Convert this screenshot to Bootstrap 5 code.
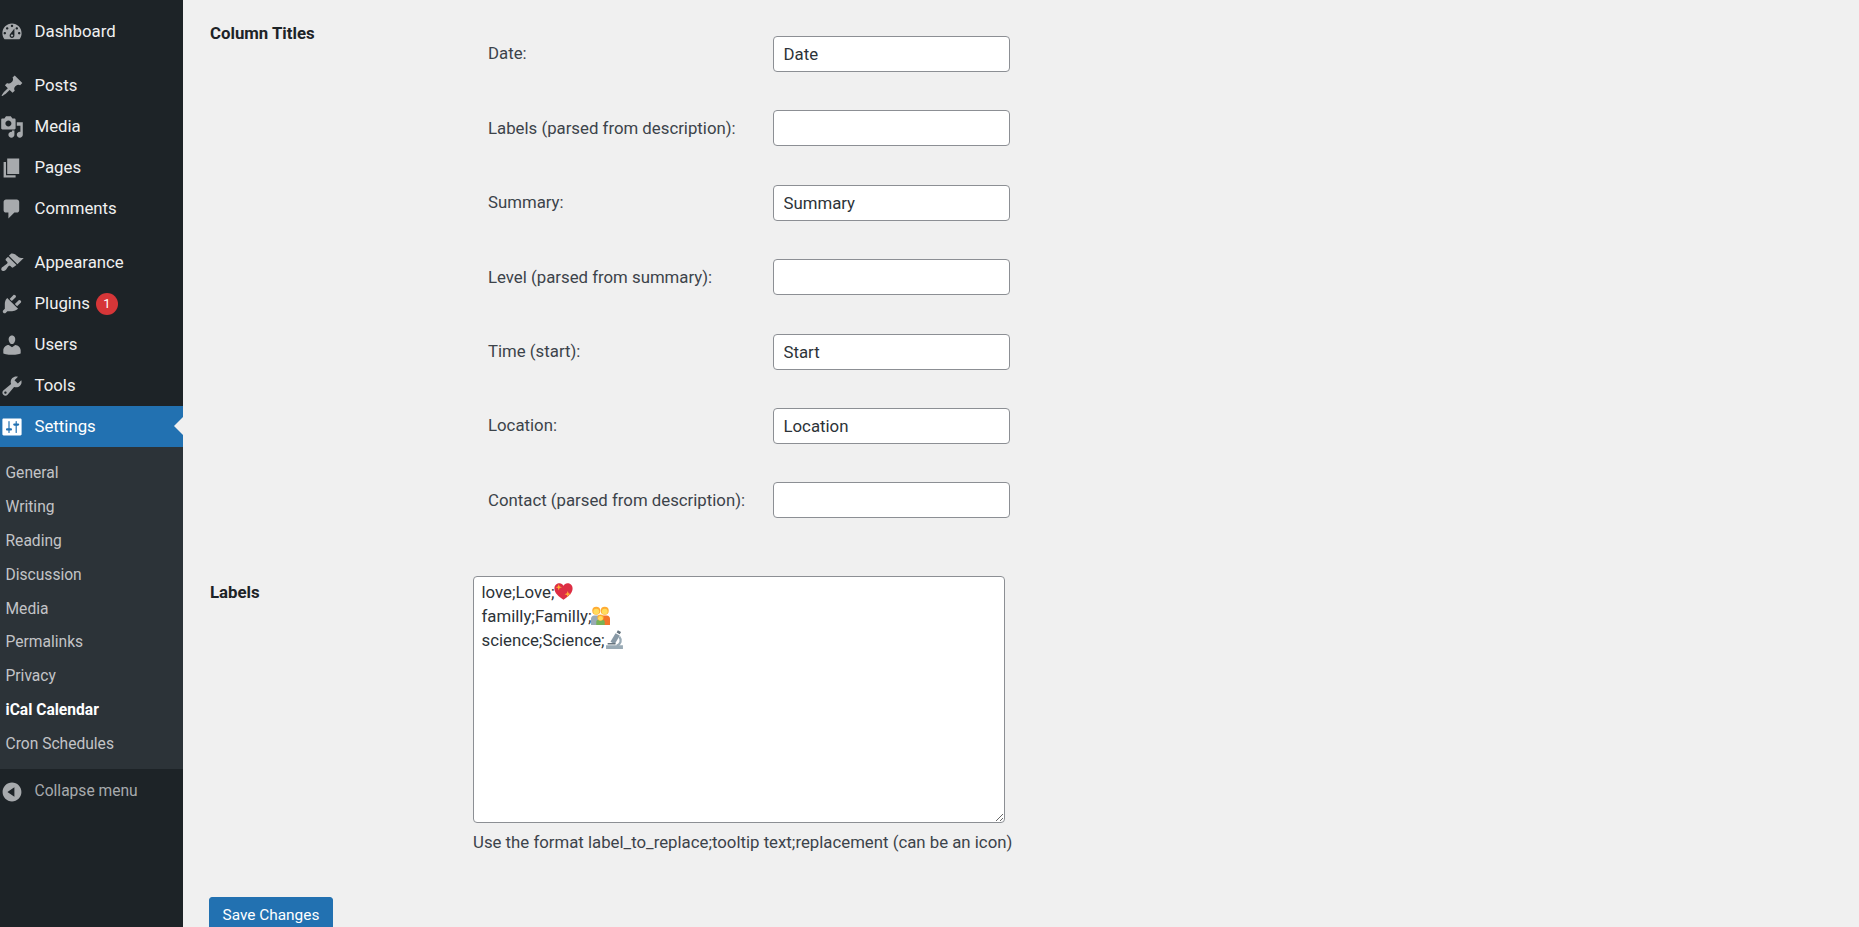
<!DOCTYPE html>
<html lang="en"><head><meta charset="utf-8"><title>iCal Calendar Settings</title>
<link href="https://cdn.jsdelivr.net/npm/bootstrap@5.3.0/dist/css/bootstrap.min.css" rel="stylesheet">
<style>
html,body{height:100%;overflow:hidden}
body{background:#f0f0f0;color:#3c434a;font:16.8px/1.5 Roboto,sans-serif}
.wp-shell{height:927px}
.wp-side{width:183px;flex:none;background:#1d2327;padding-top:11px}
.wp-item{height:41px;color:#f0f0f0;text-decoration:none;padding-left:34.500px;position:relative;line-height:41px;font-size:16.8px}
.wp-item svg{position:absolute;left:0;top:8.500px;width:24px;height:24px;fill:#a7aaad}
.wp-gap{margin-top:13px}
.wp-active{background:#2271b1;color:#fff}
.wp-active svg{fill:#fff}
.wp-active::after{content:"";position:absolute;right:0;top:11px;border:9px solid transparent;border-left:0;border-right-color:#f0f0f0}
.wp-count{width:22px;height:22px;border-radius:50%;background:#d63638;color:#fff;font-size:13px;line-height:22px;text-align:center;margin-left:6px}
.wp-sub{background:#2c3338;padding:10px 0 7px}
.wp-sub a{display:block;height:33.900px;line-height:33.900px;padding-left:5.500px;color:#c3c4c7;text-decoration:none;font-size:15.600px}
.wp-sub a.wp-current{color:#fff;font-weight:700}
.wp-collapse{color:#a7aaad;margin-top:2px;font-size:15.600px}
.wp-collapse svg{top:9px}
.wp-main{padding:0 0 0 27px;min-width:0}
.wp-head{width:263px;flex:none;font-weight:700;color:#1d2327;font-size:16.8px}
.wp-head-first{padding-top:21px}
.wp-fields{padding-top:36px;width:800px}
.wp-field{height:36px;margin-bottom:38.400px}
.wp-field:last-child{margin-bottom:0}
.wp-field label{width:300px;padding-left:15px;margin:0}
.wp-main .form-control{width:237px;height:36px;border:1px solid #8c8f94;border-radius:4px;padding:0 9.500px;color:#2c3338;font:16.8px Roboto,sans-serif;background:#fff}
.wp-labels{margin-top:57.900px}
.wp-labels .wp-head{padding-top:4px}
.wp-area{width:532px;height:247px;border:1px solid #8c8f94;border-radius:4px;background:#fff;padding:2.500px 7.500px;color:#2c3338;line-height:24px;resize:both;overflow:auto}
.wp-area svg{width:19px;height:19px;vertical-align:-3px}
.wp-help{margin:7px 0 0;color:#3c434a}
.wp-save{margin:42px 0 0 -1px;background:#2271b1;border:1px solid #2271b1;border-radius:3px;color:#fff;font-size:15.400px;line-height:1;padding:0 12.500px;height:36px}
.wp-save:hover{background:#135e96;border-color:#135e96}
</style></head><body>
<div class="wp-shell d-flex">
<nav class="wp-side d-flex flex-column">
<a class="wp-item d-flex" href="#"><svg viewBox="0 0 20 20"><path d="M3.760 16h12.480c1.100-1.370 1.760-3.110 1.760-5 0-4.420-3.580-8-8-8s-8 3.580-8 8c0 1.890.66 3.630 1.760 5zM10 4c.55 0 1 .45 1 1s-.45 1-1 1-1-.45-1-1 .45-1 1-1zM6 6c.55 0 1 .45 1 1s-.45 1-1 1-1-.45-1-1 .45-1 1-1zm8 0c.55 0 1 .45 1 1s-.45 1-1 1-1-.45-1-1 .45-1 1-1zm-5.370 5.550L12 7v6c0 1.100-.9 2-2 2s-2-.9-2-2c0-.57.24-1.080.63-1.450zM4 10c.55 0 1 .45 1 1s-.45 1-1 1-1-.45-1-1 .45-1 1-1zm12 0c.55 0 1 .45 1 1s-.45 1-1 1-1-.45-1-1 .45-1 1-1zm-5 3c0-.55-.45-1-1-1s-1 .45-1 1 .45 1 1 1 1-.45 1-1z"/></svg>Dashboard</a>
<a class="wp-item wp-gap d-flex" href="#"><svg viewBox="0 0 20 20"><path d="M10.440 3.020l1.820-1.820 6.360 6.350-1.830 1.820c-1.050-.68-2.480-.57-3.410.36l-.75.75c-.92.93-1.040 2.350-.35 3.410l-1.830 1.820-2.410-2.410-2.800 2.790c-.42.42-3.380 2.710-3.800 2.290s1.860-3.390 2.280-3.810l2.790-2.790L4.100 9.360l1.830-1.820c1.050.69 2.480.57 3.400-.36l.75-.75c.93-.92 1.050-2.350.36-3.410z"/></svg>Posts</a>
<a class="wp-item d-flex" href="#"><svg viewBox="0 0 20 20"><path d="M13 11V4c0-.55-.45-1-1-1h-1.670L9 1H5L3.670 3H2c-.55 0-1 .45-1 1v7c0 .55.45 1 1 1h10c.55 0 1-.45 1-1zM7 4.500c1.380 0 2.500 1.120 2.500 2.500S8.380 9.500 7 9.500 4.500 8.380 4.500 7 5.620 4.500 7 4.500zM14 6h5v10.500c0 1.380-1.120 2.500-2.500 2.500S14 17.880 14 16.500s1.120-2.500 2.500-2.500c.17 0 .34.02.5.05V9h-3V6zm-4 8.050V13h2v3.500c0 1.380-1.120 2.500-2.500 2.500S7 17.880 7 16.500 8.120 14 9.500 14c.17 0 .34.02.5.05z"/></svg>Media</a>
<a class="wp-item d-flex" href="#"><svg viewBox="0 0 20 20"><path d="M6 15V2h10v13H6zm-1 1h8v2H3V5h2v11z"/></svg>Pages</a>
<a class="wp-item d-flex" href="#"><svg viewBox="0 0 20 20"><path d="M5 2h9c1.100 0 2 .9 2 2v7c0 1.100-.9 2-2 2h-2l-5 5v-5H5c-1.100 0-2-.9-2-2V4c0-1.100.9-2 2-2z"/></svg>Comments</a>
<a class="wp-item wp-gap d-flex" href="#"><svg viewBox="0 0 20 20"><path d="M14.480 11.060L7.410 3.990l1.500-1.500c.5-.56 2.300-.47 3.510.32 1.210.8 1.430 1.280 2.910 2.100 1.180.64 2.450 1.260 4.450.85zm-.71.71L6.700 4.700 4.930 6.470c-.39.39-.39 1.020 0 1.410l1.060 1.060c.39.39.39 1.030 0 1.420-.6.6-1.430 1.110-2.210 1.690-.35.26-.7.53-1.010.84C1.430 13.230.6 15.040 1.300 16.100c.76 1.100 2.530.5 3.410-.37.31-.31.58-.66.85-1.010.57-.78 1.080-1.610 1.690-2.210.39-.39 1.020-.39 1.410 0l1.060 1.060c.39.39 1.020.39 1.410 0z"/></svg>Appearance</a>
<a class="wp-item d-flex align-items-center" href="#"><svg viewBox="0 0 20 20"><path d="M13.110 4.360L9.870 7.600 8 5.730l3.240-3.240c.35-.34 1.050-.2 1.560.32.52.51.66 1.210.31 1.550zm-8 1.770l.91-1.120 9.010 9.010-1.190.84c-.71.71-2.630 1.160-3.820 1.160H6.140L4.900 17.260c-.59.59-1.540.59-2.120 0-.59-.58-.59-1.530 0-2.120l1.240-1.240v-3.880c0-1.130.4-3.190 1.090-3.890zm7.260 3.970l3.240-3.240c.34-.35 1.040-.21 1.550.31.52.51.66 1.210.31 1.550l-3.240 3.250z"/></svg>Plugins<span class="wp-count">1</span></a>
<a class="wp-item d-flex" href="#"><svg viewBox="0 0 20 20"><path d="M10 9.250c-2.270 0-2.730-3.440-2.730-3.440C7 4.020 7.820 2 9.970 2c2.160 0 2.980 2.020 2.710 3.810 0 0-.41 3.440-2.680 3.440zm0 2.570L12.720 10c2.390 0 4.520 2.330 4.520 4.530v2.490s-3.650 1.130-7.240 1.130c-3.650 0-7.240-1.130-7.240-1.130v-2.490c0-2.250 1.940-4.480 4.470-4.480z"/></svg>Users</a>
<a class="wp-item d-flex" href="#"><svg viewBox="0 0 20 20"><path d="M16.680 9.770c-1.340 1.340-3.300 1.670-4.950.99l-5.410 6.520c-.99.99-2.590.99-3.580 0s-.99-2.590 0-3.570l6.520-5.420c-.68-1.650-.35-3.610.99-4.950 1.280-1.280 3.120-1.620 4.720-1.060l-2.890 2.890 2.820 2.820 2.860-2.870c.53 1.580.18 3.390-1.080 4.650zM3.810 16.210c.4.39 1.040.39 1.430 0 .4-.4.4-1.040 0-1.430-.39-.4-1.030-.4-1.430 0-.39.39-.39 1.030 0 1.430z"/></svg>Tools</a>
<a class="wp-item wp-active d-flex" href="#"><svg viewBox="0 0 20 20"><path d="M18 16V4c0-.55-.45-1-1-1H3c-.55 0-1 .45-1 1v12c0 .55.45 1 1 1h14c.55 0 1-.45 1-1zM8 11h1c.55 0 1 .45 1 1s-.45 1-1 1H8v1.500c0 .28-.22.5-.5.5s-.5-.22-.5-.5V13H6c-.55 0-1-.45-1-1s.45-1 1-1h1V5.500c0-.28.22-.5.5-.5s.5.22.5.5V11zm5-2h-1c-.55 0-1-.45-1-1s.45-1 1-1h1V5.500c0-.28.22-.5.5-.5s.5.22.5.5V7h1c.55 0 1 .45 1 1s-.45 1-1 1h-1v5.500c0 .28-.22.5-.5.5s-.5-.22-.5-.5V9z"/></svg>Settings</a>
<div class="wp-sub">
<a href="#">General</a><a href="#">Writing</a><a href="#">Reading</a><a href="#">Discussion</a><a href="#">Media</a><a href="#">Permalinks</a><a href="#">Privacy</a><a class="wp-current" href="#">iCal Calendar</a><a href="#">Cron Schedules</a>
</div>
<a class="wp-item wp-collapse d-flex" href="#"><svg viewBox="0 0 20 20"><path d="M10 2.160c4.330 0 7.840 3.510 7.840 7.840s-3.510 7.840-7.840 7.840S2.160 14.330 2.160 10 5.710 2.160 10 2.160zm2 11.720V6.120L6.180 9.970z"/></svg>Collapse menu</a>
</nav>
<main class="wp-main flex-grow-1">
<form onsubmit="return false">
<div class="d-flex">
<div class="wp-head wp-head-first">Column Titles</div>
<div class="wp-fields">
<div class="wp-field d-flex align-items-center"><label for="f1">Date:</label><input id="f1" class="form-control" value="Date"></div>
<div class="wp-field d-flex align-items-center"><label for="f2">Labels (parsed from description):</label><input id="f2" class="form-control"></div>
<div class="wp-field d-flex align-items-center"><label for="f3">Summary:</label><input id="f3" class="form-control" value="Summary"></div>
<div class="wp-field d-flex align-items-center"><label for="f4">Level (parsed from summary):</label><input id="f4" class="form-control"></div>
<div class="wp-field d-flex align-items-center"><label for="f5">Time (start):</label><input id="f5" class="form-control" value="Start"></div>
<div class="wp-field d-flex align-items-center"><label for="f6">Location:</label><input id="f6" class="form-control" value="Location"></div>
<div class="wp-field d-flex align-items-center"><label for="f7">Contact (parsed from description):</label><input id="f7" class="form-control"></div>
</div>
</div>
<div class="wp-labels d-flex">
<div class="wp-head">Labels</div>
<div>
<div class="wp-area" role="textbox" aria-multiline="true" contenteditable="true">
<div>love;Love;<svg viewBox="0 0 18 18"><path fill="#dd2e44" d="M9 16.800C4.500 14 .2 10.500.4 6 .5 3 2.800 1.300 5.200 1.300 7 1.300 8.200 2.200 9 3.500c.8-1.300 2-2.200 3.800-2.200 2.400 0 4.700 1.700 4.800 4.700.2 4.500-4.100 8-8.600 10.800z"/><path fill="#ffac33" d="M4.500 2l.8 2.200 2.200.8-2.200.8-.8 2.200-.8-2.200L1.500 5l2.200-.8zM13 8.500l.8 2.200 2.200.8-2.200.8-.8 2.200-.8-2.200-2.200-.8 2.200-.8z"/></svg></div>
<div>familly;Familly;<svg viewBox="0 0 18 18"><path fill="#99aab5" d="M0 12c0-1.600 1.400-3 3-3h4v9H0z"/><path fill="#f4742b" d="M11 9h4c1.700 0 3 1.300 3 3v6h-7z"/><circle cx="5" cy="4.500" r="3.800" fill="#ffac33"/><circle cx="13" cy="4.500" r="3.800" fill="#ffac33"/><circle cx="5" cy="5.300" r="2.800" fill="#ffdc5d"/><circle cx="13" cy="5.300" r="2.800" fill="#ffdc5d"/><path fill="#77b255" d="M5 15c0-1.200 1-2 2.200-2h3.600c1.200 0 2.200.8 2.200 2v3H5z"/><circle cx="9" cy="11" r="3" fill="#ffac33"/><circle cx="9" cy="11.600" r="2.200" fill="#ffdc5d"/></svg></div>
<div>science;Science;<svg viewBox="0 0 18 18"><path fill="#99aab5" d="M1 14.500h16V18H1z"/><path fill="#8899a6" d="M10 3l4 2.300-4.800 8.200-4-2.300z"/><path fill="#66757f" d="M12.200.2l3 1.700-1.200 2.100-3-1.700zM2.500 12.200h7.500v1.600H2.500z"/><path fill="none" stroke="#99aab5" stroke-width="2.200" d="M13.500 6.500c2.500 3 1.500 7-2.500 8.500"/></svg></div>
</div>
<p class="wp-help">Use the format label_to_replace;tooltip text;replacement (can be an icon)</p>
</div>
</div>
<button class="btn wp-save" type="submit">Save Changes</button>
</form>
</main>
</div>
</body></html>
